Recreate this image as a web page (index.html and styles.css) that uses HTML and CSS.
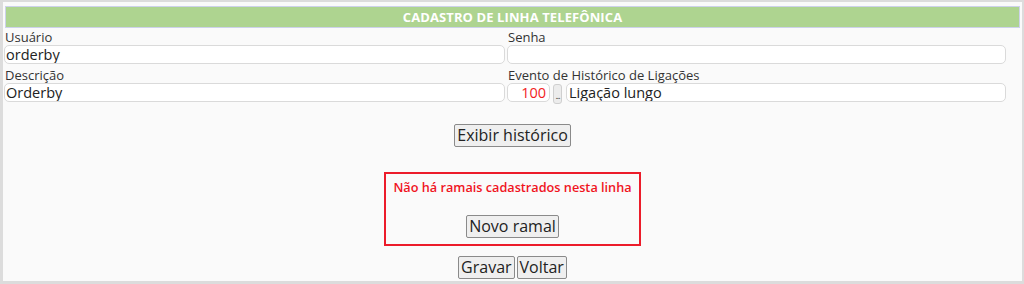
FILE: index.html
```html
<!DOCTYPE html>
<html lang="pt-BR">
<head>
<meta charset="utf-8">
<title>Cadastro de Linha Telefônica</title>
<link rel="stylesheet" href="styles.css">
</head>
<body>
<div class="panel">
  <div class="header">CADASTRO DE LINHA TELEFÔNICA</div>
  <div class="fields">
    <div class="field left">
      <label class="lbl">Usuário</label>
      <input class="txt" type="text" value="orderby">
    </div>
    <div class="field right">
      <label class="lbl">Senha</label>
      <input class="txt" type="password" value="">
    </div>
    <div class="field left">
      <label class="lbl">Descrição</label>
      <input class="txt" type="text" value="Orderby">
    </div>
    <div class="field right">
      <label class="lbl">Evento de Histórico de Ligações</label>
      <div class="event">
        <input class="txt code" type="text" value="100">
        <button class="dots" type="button">...</button>
        <input class="txt evname" type="text" value="Ligação lungo">
      </div>
    </div>
  </div>
  <div class="row-center top-action">
    <button class="btn" type="button">Exibir histórico</button>
  </div>
  <div class="ramais">
    <p class="msg">Não há ramais cadastrados nesta linha</p>
    <button class="btn" type="button">Novo ramal</button>
  </div>
  <div class="row-center bottom-actions">
    <button class="btn" type="button">Gravar</button>
    <button class="btn" type="button">Voltar</button>
  </div>
</div>
</body>
</html>
```
FILE: styles.css
```css
html, body {
  margin: 0;
  padding: 0;
}
body {
  background: #dcdcdc;
  font-family: "Open Sans", "Noto Sans", sans-serif;
  height: 284px;
  overflow: hidden;
}
.panel {
  margin: 2px 2px 0 3px;
  height: 279px;
  box-sizing: border-box;
  background: #fafafa;
  padding-top: 4px;
  display: flex;
  flex-direction: column;
}
.header {
  margin: 0 2px;
  height: 22px;
  box-sizing: border-box;
  border: 1px solid #cdd2ea;
  background: #aed490;
  color: #ffffff;
  font-weight: 700;
  font-size: 13px;
  letter-spacing: 0.1px;
  line-height: 20px;
  text-align: center;
}
.fields {
  display: grid;
  grid-template-columns: 503px 499px;
  padding-left: 1px;
  margin-top: 2px;
}
.field {
  display: flex;
  flex-direction: column;
  margin-bottom: 4px;
}
.lbl {
  display: block;
  font-size: 13px;
  line-height: 15px;
  height: 15px;
  color: #333333;
  padding-left: 1px;
}
.txt {
  box-sizing: border-box;
  height: 19px;
  border: 1px solid #dadada;
  border-radius: 5px;
  background: #ffffff;
  font-family: "Open Sans", "Noto Sans", sans-serif;
  font-size: 14.5px;
  line-height: 17px;
  color: #222222;
  padding: 0 1px;
  margin: 0;
  outline: none;
}
.left .txt {
  width: 501px;
}
.right > .txt {
  width: 499px;
}
.event {
  display: flex;
  align-items: flex-start;
  width: 499px;
}
.code {
  width: 43px;
  text-align: right;
  color: #f21d1d;
  padding-right: 3px;
}
.dots {
  box-sizing: border-box;
  width: 9px;
  height: 20px;
  margin: 1px 4px 0 3px;
  padding: 0;
  border: 1px solid #cfcfcf;
  border-radius: 3px;
  background: #ececec;
  color: #444;
  font-family: "Open Sans", sans-serif;
  font-size: 9px;
  line-height: 22px;
  overflow: hidden;
  letter-spacing: -1px;
}
.evname {
  flex: 1;
  padding-left: 2px;
}
.row-center {
  display: flex;
  justify-content: center;
  gap: 2px;
}
.top-action {
  margin-top: 16px;
}
.btn {
  box-sizing: border-box;
  height: 23px;
  padding: 1px 2px;
  margin: 0;
  border: 1px solid #8a8a8a;
  border-radius: 2px;
  background: #efefef;
  color: #222222;
  font-family: "Open Sans", "Noto Sans", sans-serif;
  font-size: 16px;
  line-height: 19px;
}
.ramais {
  align-self: center;
  width: 257px;
  box-sizing: border-box;
  margin-top: 25px;
  border: 2px solid #ec1c2a;
  padding: 5px 0 6px;
  display: flex;
  flex-direction: column;
  align-items: center;
}
.msg {
  margin: 0;
  color: #f0141e;
  font-size: 12.7px;
  font-weight: 600;
  line-height: 16px;
}
.ramais .btn {
  margin-top: 20px;
}
.bottom-actions {
  margin-top: 10px;
}
```
